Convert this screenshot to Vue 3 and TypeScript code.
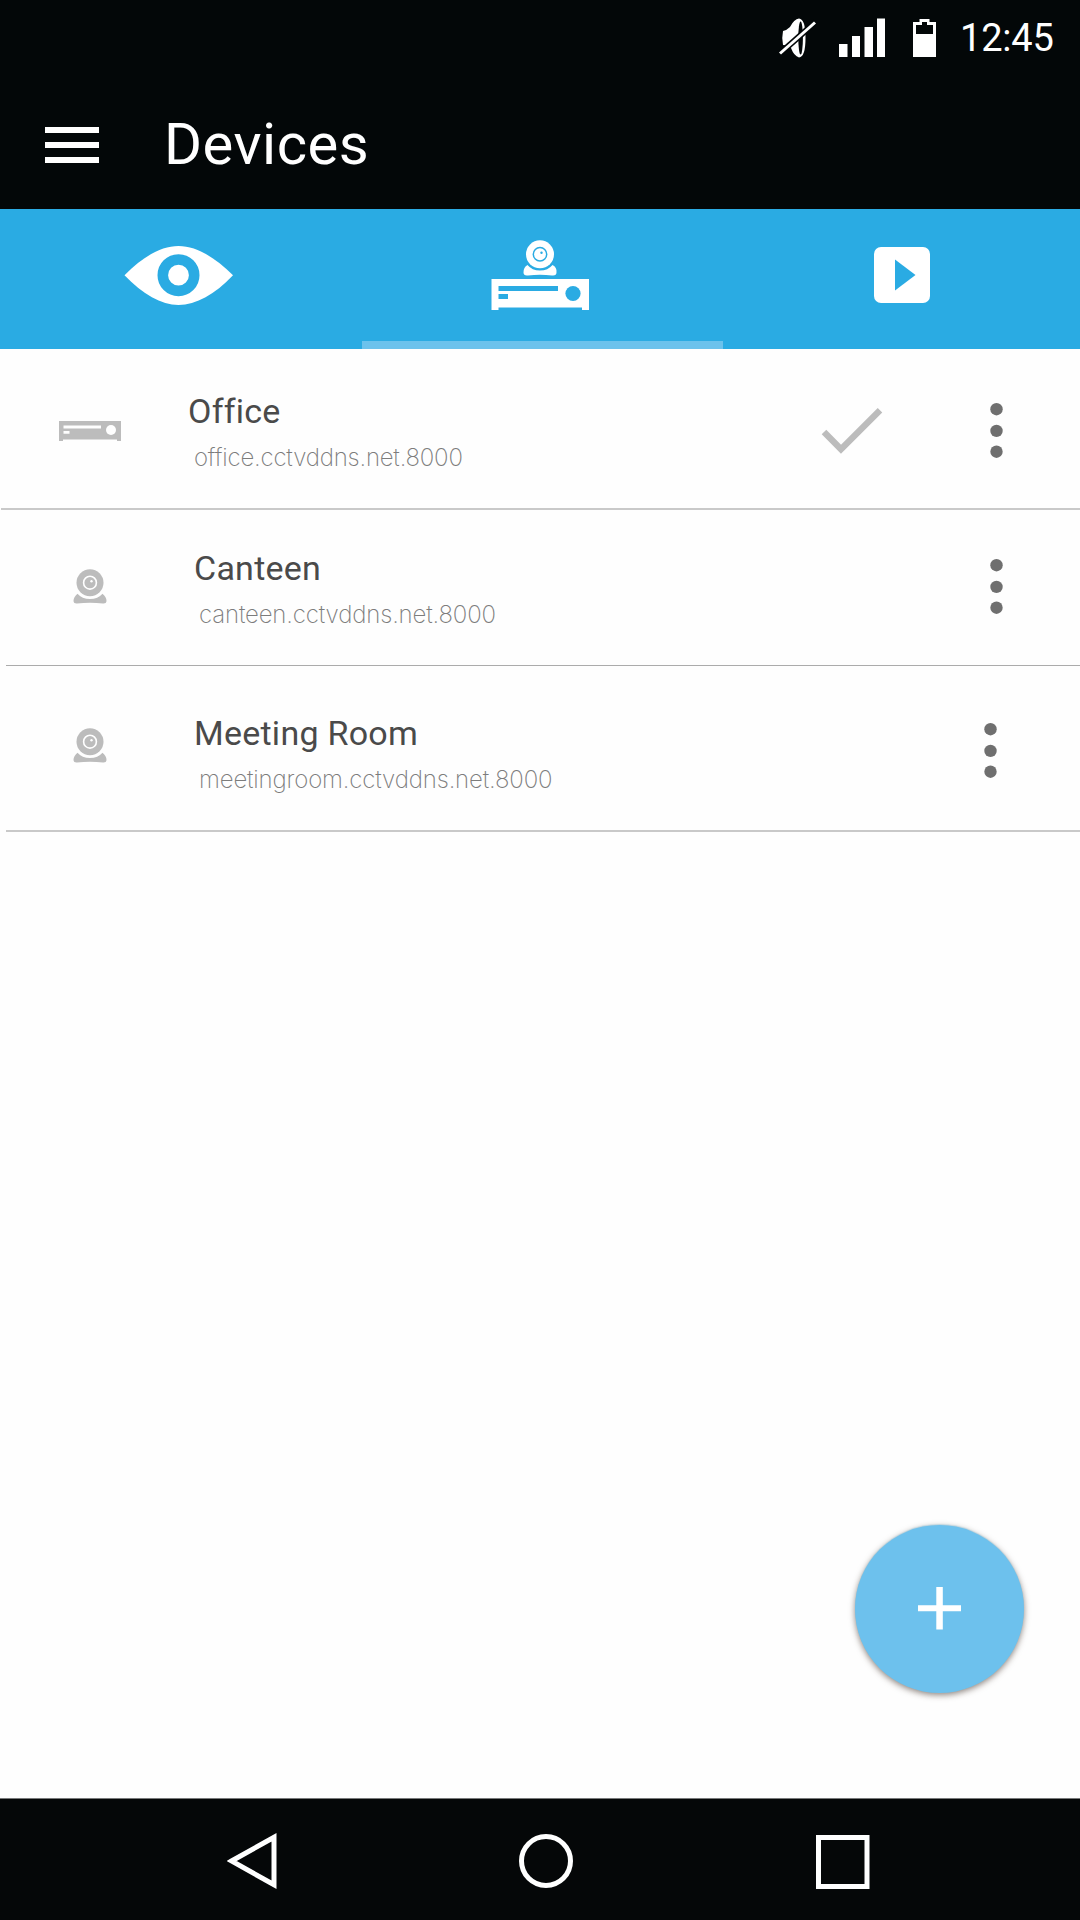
<script setup lang="ts">
interface Device {
  id: string
  name: string
  address: string
  kind: 'recorder' | 'camera'
  selected: boolean
}

const devices: Device[] = [
  { id: 'office', name: 'Office', address: 'office.cctvddns.net.8000', kind: 'recorder', selected: true },
  { id: 'canteen', name: 'Canteen', address: 'canteen.cctvddns.net.8000', kind: 'camera', selected: false },
  { id: 'meeting', name: 'Meeting Room', address: 'meetingroom.cctvddns.net.8000', kind: 'camera', selected: false },
]
</script>

<template>
  <div class="screen">
    <header class="top">
      <div class="status">
        <svg class="mute" width="38" height="40" viewBox="0 0 38 40">
          <path fill="#fff" d="M4 13Q8 12 11 9Q15 1 20 .5Q26.500 1 26.500 20Q26.500 39 20 39.500Q15 38 12 30Q9 27 4 27Q2.500 20 4 13Z" />
          <ellipse cx="21.600" cy="20" rx="2.300" ry="16.500" fill="#030708" />
          <path fill="none" stroke="#030708" stroke-width="6" d="M2 34.500L36.500 4" />
          <path fill="none" stroke="#fff" stroke-width="3" d="M1 35.500L36 4.500" />
        </svg>
        <svg class="signal" width="46" height="39" viewBox="0 0 46 39">
          <path fill="#fff" d="M0 26h8.500v13H0zM13 18h8v21h-8zM25.500 9h8.500v30h-8.500zM38 .5h8V39h-8z" />
        </svg>
        <svg class="battery" width="23" height="38" viewBox="0 0 23 38">
          <path fill="#fff" fill-rule="evenodd" d="M0 3h6.500V0h10v3H23v35H0zM3 6v9h17V6h-6V3H9v3z" />
        </svg>
        <span class="clock">12:45</span>
      </div>
      <div class="appbar">
        <svg class="menu" width="54" height="36" viewBox="0 0 54 36">
          <path fill="#fff" d="M0 0h54v6H0zM0 15h54v6H0zM0 30h54v6H0z" />
        </svg>
        <h1 class="title">Devices</h1>
      </div>
    </header>

    <nav class="tabs">
      <div class="tab live">
        <svg width="110" height="60" viewBox="0 0 110 60">
          <path fill="#fff" d="M.5 29.300C19 10.500 37 0 54.500 0S90 10.500 109 29.300C91 48.500 72 59 54.500 59S19 48.500 .5 29.300Z" />
          <circle cx="54.500" cy="29.200" r="15.700" fill="none" stroke="#2aabe3" stroke-width="10.600" />
        </svg>
      </div>
      <div class="tab devices">
        <svg width="98" height="70" viewBox="0 0 98 70">
          <circle cx="49" cy="14.300" r="14" fill="#fff" />
          <circle cx="49" cy="14.300" r="6.700" fill="none" stroke="#2aabe3" stroke-width="1.500" />
          <circle cx="50.500" cy="12.800" r="1.200" fill="#2aabe3" />
          <path fill="#fff" d="M36.500 25Q41 30.500 49 30.500T61.500 25Q66 27 65.500 32.500Q65.500 36 61 35.500Q49 34 37 35.500Q32.500 36 32.500 32.500Q32.500 27 36.500 25Z" />
          <path fill="#fff" fill-rule="evenodd" d="M.5 39H98v31h-7v-2.500H7.500V70H.5zM7.500 46v5h59.500v-5zM7.500 54v5H17v-5z" />
          <circle cx="82" cy="53.500" r="7.600" fill="#2aabe3" />
        </svg>
      </div>
      <div class="tab playback">
        <svg width="56" height="56" viewBox="0 0 56 56">
          <rect width="56" height="56" rx="7" fill="#fff" />
          <path fill="#2aabe3" d="M21 12.500L41.500 28L21 43.500Z" />
        </svg>
      </div>
    </nav>

    <main class="list">
      <section v-for="d in devices" :key="d.id" class="row" :class="d.id">
        <div class="kind">
          <svg v-if="d.kind === 'recorder'" width="62" height="20" viewBox="0 0 62 20">
            <path fill="#bcbcbc" fill-rule="evenodd" d="M0 0h62v20h-4v-1.500H4V20H0zM4.500 4.500v3H42v-3zM4.500 10v2.800H10.500V10z" />
            <circle cx="52" cy="9" r="5" fill="#fff" />
          </svg>
          <svg v-else width="34" height="35" viewBox="0 0 34 35">
            <circle cx="17" cy="13.700" r="13.500" fill="#bcbcbc" />
            <circle cx="17" cy="13.700" r="6.400" fill="none" stroke="#fff" stroke-width="1.600" />
            <circle cx="18.500" cy="12.200" r="1.200" fill="#fff" />
            <path fill="#bcbcbc" d="M4.500 24.800Q9 30 17 30T29.500 24.800Q33.500 28 33.500 32Q33.300 34.700 30 34.500Q17 33 4 34.500Q.7 34.700 .5 32Q.5 28 4.500 24.800Z" />
          </svg>
        </div>
        <div class="info">
          <div class="name">{{ d.name }}</div>
          <div class="address">{{ d.address }}</div>
        </div>
        <svg v-if="d.selected" class="check" width="62" height="48" viewBox="0 0 62 48">
          <path fill="none" stroke="#bcbcbc" stroke-width="6.400" d="M3 25L20 42.300L59 3.300" />
        </svg>
        <svg class="more" width="13" height="56" viewBox="0 0 13 56">
          <g fill="#6f6f6f">
            <circle cx="6.500" cy="6.200" r="6.200" />
            <circle cx="6.500" cy="27.900" r="6.200" />
            <circle cx="6.500" cy="48.700" r="6.200" />
          </g>
        </svg>
      </section>
    </main>

    <button class="fab" type="button" aria-label="Add device">
      <svg width="43" height="43" viewBox="0 0 43 43">
        <path fill="#fff" d="M18.300 0h6.500v18.300H43v6H24.800V42.500H18.300V24.300H0v-6h18.300z" />
      </svg>
    </button>

    <footer class="navbar">
      <svg class="back" width="50" height="58" viewBox="0 0 50 58">
        <path fill="none" stroke="#fff" stroke-width="5" d="M4.500 29L47 5.200V52.800Z" />
      </svg>
      <svg class="home" width="54" height="54" viewBox="0 0 54 54">
        <circle cx="27" cy="27" r="24.500" fill="none" stroke="#fff" stroke-width="5" />
      </svg>
      <svg class="recent" width="54" height="54" viewBox="0 0 54 54">
        <path fill="none" stroke="#fff" stroke-width="5" d="M2.500 2.500h48.500v49h-48.500z" />
      </svg>
    </footer>
  </div>
</template>

<style>
body {
  margin: 0;
  background: #fefefe;
}
</style>

<style scoped>
.screen {
  position: relative;
  display: flex;
  flex-direction: column;
  width: 1080px;
  height: 1920px;
  overflow: hidden;
  background: #fefefe;
  font-family: Roboto, "Liberation Sans", sans-serif;
}
svg {
  display: block;
  flex: none;
}
.top {
  height: 209px;
  background: #030708;
  color: #fff;
}
.status {
  display: flex;
  align-items: flex-start;
  height: 76px;
  padding-left: 779px;
}
.mute { margin-top: 18px; }
.signal { margin: 18px 0 0 22px; }
.battery { margin: 19px 0 0 28px; }
.clock {
  margin: 16px 0 0 24px;
  font-size: 38px;
  line-height: 45px;
  letter-spacing: -0.2px;
  white-space: nowrap;
}
.appbar {
  display: flex;
  align-items: flex-start;
  padding-left: 45px;
}
.menu { margin-top: 51px; }
.title {
  margin: 34px 0 0 65px;
  font-size: 58px;
  font-weight: 400;
  line-height: 68px;
  letter-spacing: 0.5px;
}
.tabs {
  display: flex;
  height: 140px;
  background: #2aabe3;
}
.tab {
  display: flex;
  justify-content: center;
  align-items: flex-start;
  box-sizing: border-box;
}
.live { width: 361.5px; padding: 37px 4px 0 0; }
.devices { width: 361.5px; padding-top: 31px; padding-right: 4px; border-bottom: 8px solid #6cc2ec; }
.playback { width: 357px; padding: 38px 0 0 0; }
.list { flex: 1; }
.row {
  display: flex;
  align-items: flex-start;
  box-sizing: border-box;
  border-bottom: 2px solid #c9c9c9;
}
.kind {
  display: flex;
  justify-content: center;
  flex: none;
}
.info {
  flex: 1;
  white-space: nowrap;
}
.name {
  color: #4a4a4a;
  font-size: 34px;
  line-height: 40px;
  letter-spacing: 0.25px;
}
.address {
  color: #7c7c7c;
  font-family: Inter, "Liberation Sans", sans-serif;
  font-size: 24px;
  font-weight: 200;
  line-height: 30px;
  letter-spacing: -0.15px;
}
.office { height: 161px; margin-left: 1px; }
.office .kind { width: 178px; padding-top: 72px; }
.office .info { padding: 42px 0 0 9px; }
.office .address { padding: 12px 0 0 6px; letter-spacing: -0.2px; }
.office .check { margin-top: 58px; }
.office .more { margin: 54px 77px 0 107px; }
.canteen { height: 156px; margin-left: 6px; border-bottom-width: 1px; border-color: #ababab; }
.canteen .kind { width: 168px; padding-top: 59px; }
.canteen .info { padding: 38px 0 0 20px; }
.canteen .address { padding: 12px 0 0 5px; }
.canteen .more { margin: 49px 77px 0 0; }
.meeting { height: 166px; margin-left: 6px; }
.meeting .kind { width: 168px; padding-top: 62px; }
.meeting .info { padding: 47px 0 0 20px; }
.meeting .address { padding: 12px 0 0 5px; }
.meeting .more { margin: 57px 83px 0 0; }
.fab {
  position: absolute;
  left: 855px;
  top: 1525px;
  display: flex;
  align-items: center;
  justify-content: center;
  width: 169px;
  height: 168px;
  padding: 0 0 1px;
  border: 0;
  border-radius: 50%;
  background: #6dc1ed;
  box-shadow: 0 2px 6px rgba(50, 35, 25, 0.55), 0 -1px 1px #d3effc;
}
.navbar {
  display: flex;
  align-items: flex-start;
  height: 122px;
  box-sizing: border-box;
  border-top: 1px solid #77797a;
  padding-left: 227px;
  background: #050708;
}
.back { margin-top: 33px; }
.home { margin: 35px 0 0 242px; }
.recent { margin: 36px 0 0 243px; }
</style>
